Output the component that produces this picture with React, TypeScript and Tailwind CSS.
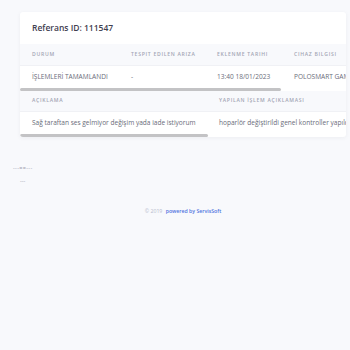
export default function App() {
  return (
    <div className="min-h-[350px] bg-[#f8f9fc] font-['Open_Sans',sans-serif] text-[#6e707e]">
      <div className="pt-3 pl-5 pr-1">
        <div className="overflow-hidden rounded-[3px] bg-white shadow-[0_1px_4px_rgba(58,59,69,0.06)]">
          <div className="flex h-8 items-center px-3">
            <h1 className="text-[8.5px] font-semibold text-[#3f4050]">Referans ID: 111547</h1>
          </div>
          <DetailTable
            width={407}
            thumb={261}
            cols={[
              { label: "Durum", w: 99, value: "İŞLEMLERİ TAMAMLANDI" },
              { label: "Tespit Edilen Arıza", w: 86, value: "-" },
              { label: "Eklenme Tarihi", w: 77, value: "13:40 18/01/2023" },
              { label: "Cihaz Bilgisi", w: 145, value: "POLOSMART GAMING KULAKLIK" },
            ]}
          />
          <DetailTable
            width={565}
            thumb={188}
            headH="h-[20px]"
            cols={[
              { label: "Açıklama", w: 187, value: "Sağ taraftan ses gelmiyor değişim yada iade istiyorum" },
              { label: "Yapılan İşlem Açıklaması", w: 378, value: "hoparlör değiştirildi genel kontroller yapıldı" },
            ]}
          />
        </div>
      </div>
      <div className="mt-[28px] pl-[13px] text-[5.5px] leading-[6px] tracking-[0.06em] text-[#9a9cab]">---==---</div>
      <div className="mt-[7px] pl-5 text-[5.5px] leading-[6px] text-[#9a9cab]">---</div>
      <footer className="mt-6 pl-4 text-center text-[5.2px]">
        <span className="text-[#b7b9cc]">© 2019 </span>
        <span className="ml-0.5 font-semibold text-[#4e73df]">powered by ServisSoft</span>
      </footer>
    </div>
  );
}

type Col = { label: string; w: number; value: string };

function DetailTable({
  width,
  thumb,
  cols,
  headH = "h-[21px]",
}: {
  width: number;
  thumb: number;
  cols: Col[];
  headH?: string;
}) {
  return (
    <div className="overflow-hidden">
      <div style={{ width }}>
        <div className={`flex ${headH} items-center bg-[#f8f9fc]`}>
          {cols.map((c) => (
            <div
              key={c.label}
              style={{ width: c.w }}
              className="shrink-0 pl-3 text-[5.1px] font-semibold uppercase tracking-[0.14em] text-[#a3a5b4]"
            >
              {c.label}
            </div>
          ))}
        </div>
        <div className="flex h-[23px] items-center border-t border-[#f0f1f5]">
          {cols.map((c) => (
            <div
              key={c.label}
              style={{ width: c.w }}
              className="shrink-0 whitespace-nowrap pl-3 text-[6.55px] text-[#6a6c7a]"
            >
              {c.value}
            </div>
          ))}
        </div>
      </div>
      <div className="h-[3px]">
        <div style={{ width: thumb }} className="h-[3px] rounded-full bg-[#c3c3c5]" />
      </div>
    </div>
  );
}
